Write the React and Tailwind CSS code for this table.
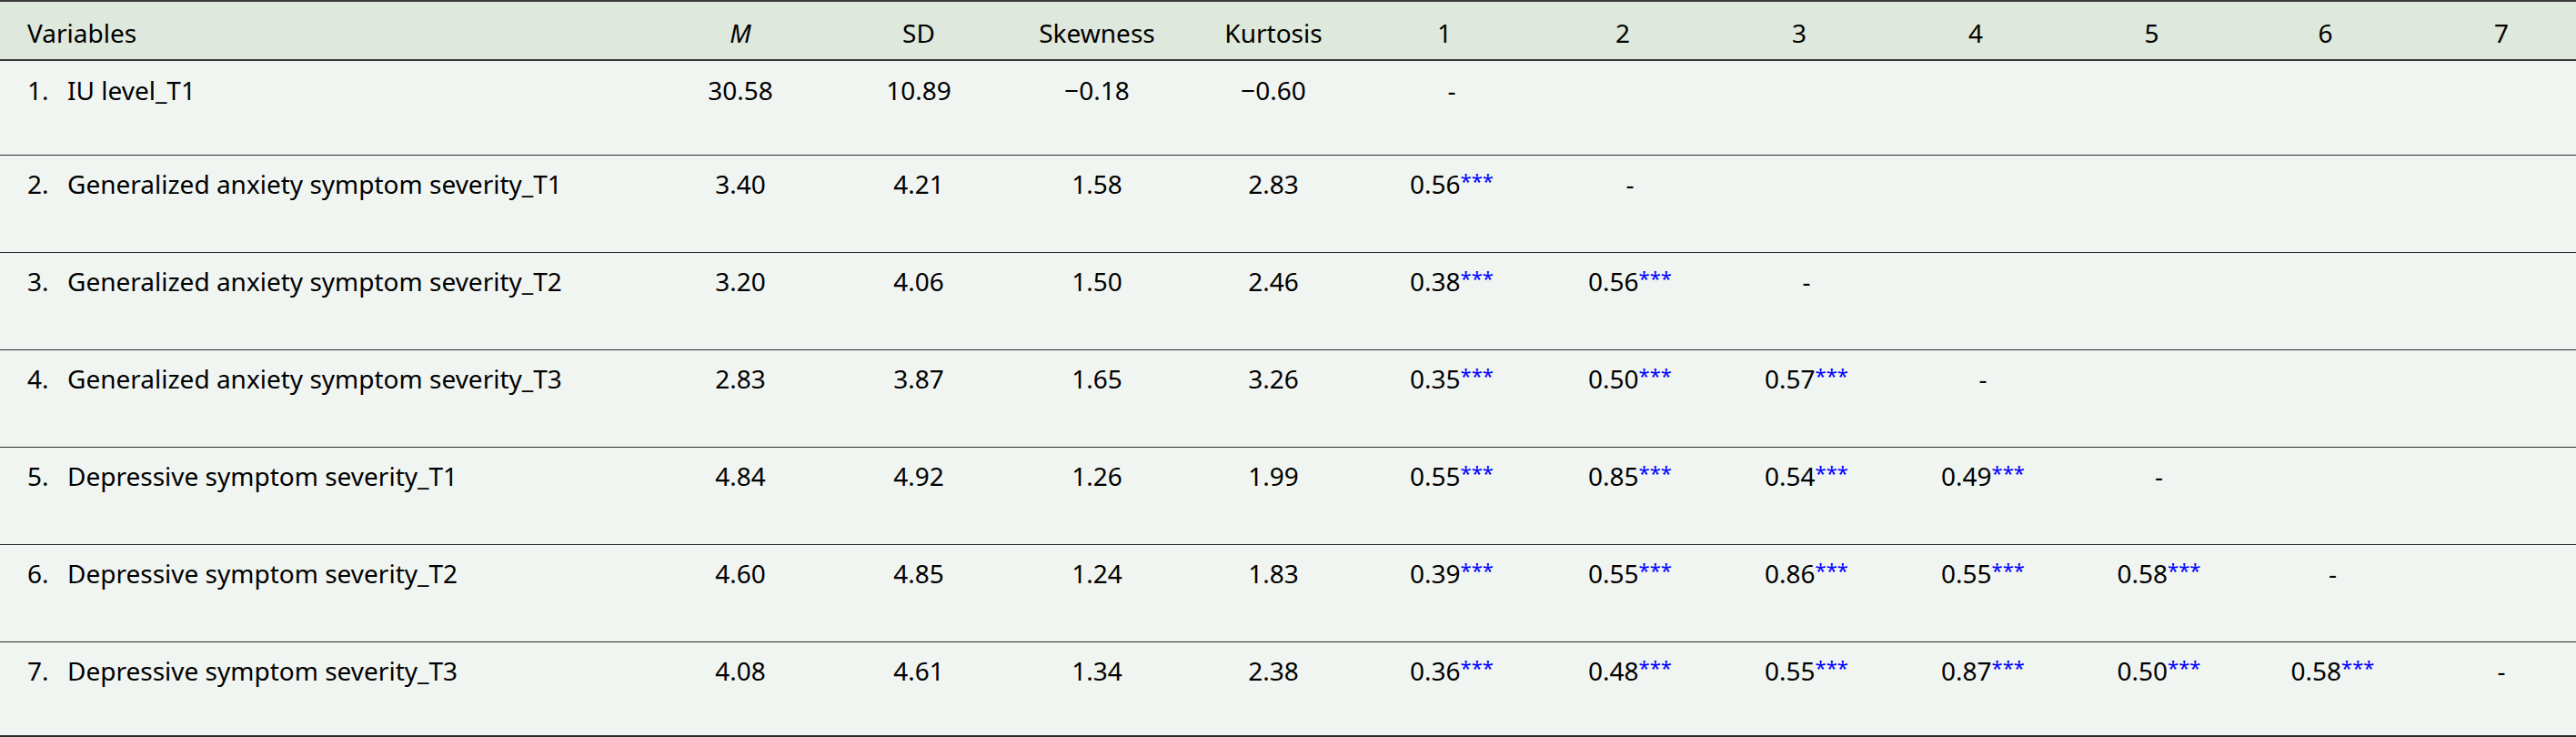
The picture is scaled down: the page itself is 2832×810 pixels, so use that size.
import React from "react";

const GRID =
  "grid grid-cols-[717px_194px_198px_194px_194px_198px_194px_194px_194px_193px_189px_173px]";

const rows = [
  { label: "IU level_T1", stats: ["30.58", "10.89", "−0.18", "−0.60"], r: [] },
  { label: "Generalized anxiety symptom severity_T1", stats: ["3.40", "4.21", "1.58", "2.83"], r: ["0.56"] },
  { label: "Generalized anxiety symptom severity_T2", stats: ["3.20", "4.06", "1.50", "2.46"], r: ["0.38", "0.56"] },
  { label: "Generalized anxiety symptom severity_T3", stats: ["2.83", "3.87", "1.65", "3.26"], r: ["0.35", "0.50", "0.57"] },
  { label: "Depressive symptom severity_T1", stats: ["4.84", "4.92", "1.26", "1.99"], r: ["0.55", "0.85", "0.54", "0.49"] },
  { label: "Depressive symptom severity_T2", stats: ["4.60", "4.85", "1.24", "1.83"], r: ["0.39", "0.55", "0.86", "0.55", "0.58"] },
  { label: "Depressive symptom severity_T3", stats: ["4.08", "4.61", "1.34", "2.38"], r: ["0.36", "0.48", "0.55", "0.87", "0.50", "0.58"] },
];

function Stars() {
  return <span className="relative -top-[6px] text-[22px] text-[#0000ff]">***</span>;
}

function Row({ row, idx }) {
  // 행 높이: 첫 행 103, 중간 107, 마지막 103
  const h =
    idx === 0
      ? "h-[103px] pt-[12px]"
      : idx === rows.length - 1
        ? "h-[103px] border-t border-[#2b2b2b] pt-[11px]"
        : "h-[107px] border-t border-[#2b2b2b] pt-[11px]";
  const cells = [];
  for (let c = 0; c < 7; c++) {
    let content = null;
    if (c < row.r.length) {
      content = (
        <>
          {row.r[c]}
          <Stars />
        </>
      );
    } else if (c === idx) {
      content = "-";
    }
    cells.push(
      <div key={c} className={c === 6 ? "pl-[9px] text-center" : "text-center"}>
        {content}
      </div>,
    );
  }
  return (
    <div className={`${GRID} ${h} items-start`}>
      <div className="flex pl-[30px]">
        <span className="w-[44px]">{idx + 1}.</span>
        <span>{row.label}</span>
      </div>
      {row.stats.map((s, i) => (
        <div key={i} className="text-center">
          {s}
        </div>
      ))}
      {cells}
    </div>
  );
}

export default function App() {
  return (
    <div className="w-[2832px] bg-[#f1f5f1] font-['Noto_Sans',sans-serif] text-[28px] leading-[40px] text-black">
      <div className="border-t-2 border-b-2 border-[#3a3a3a]">
        <div className={`${GRID} h-[63px] items-start bg-[#dfe8dc] pt-[14px]`}>
          <div className="pl-[30px]">Variables</div>
          <div className="text-center italic">M</div>
          <div className="text-center">SD</div>
          <div className="text-center">Skewness</div>
          <div className="text-center">Kurtosis</div>
          {["1", "2", "3", "4", "5", "6"].map((n) => (
            <div key={n} className="pr-[16px] text-center">
              {n}
            </div>
          ))}
          <div className="pl-[9px] text-center">7</div>
        </div>
      </div>
      <div className="border-b-2 border-[#2b2b2b]">
        {rows.map((row, i) => (
          <Row key={i} row={row} idx={i} />
        ))}
      </div>
    </div>
  );
}
